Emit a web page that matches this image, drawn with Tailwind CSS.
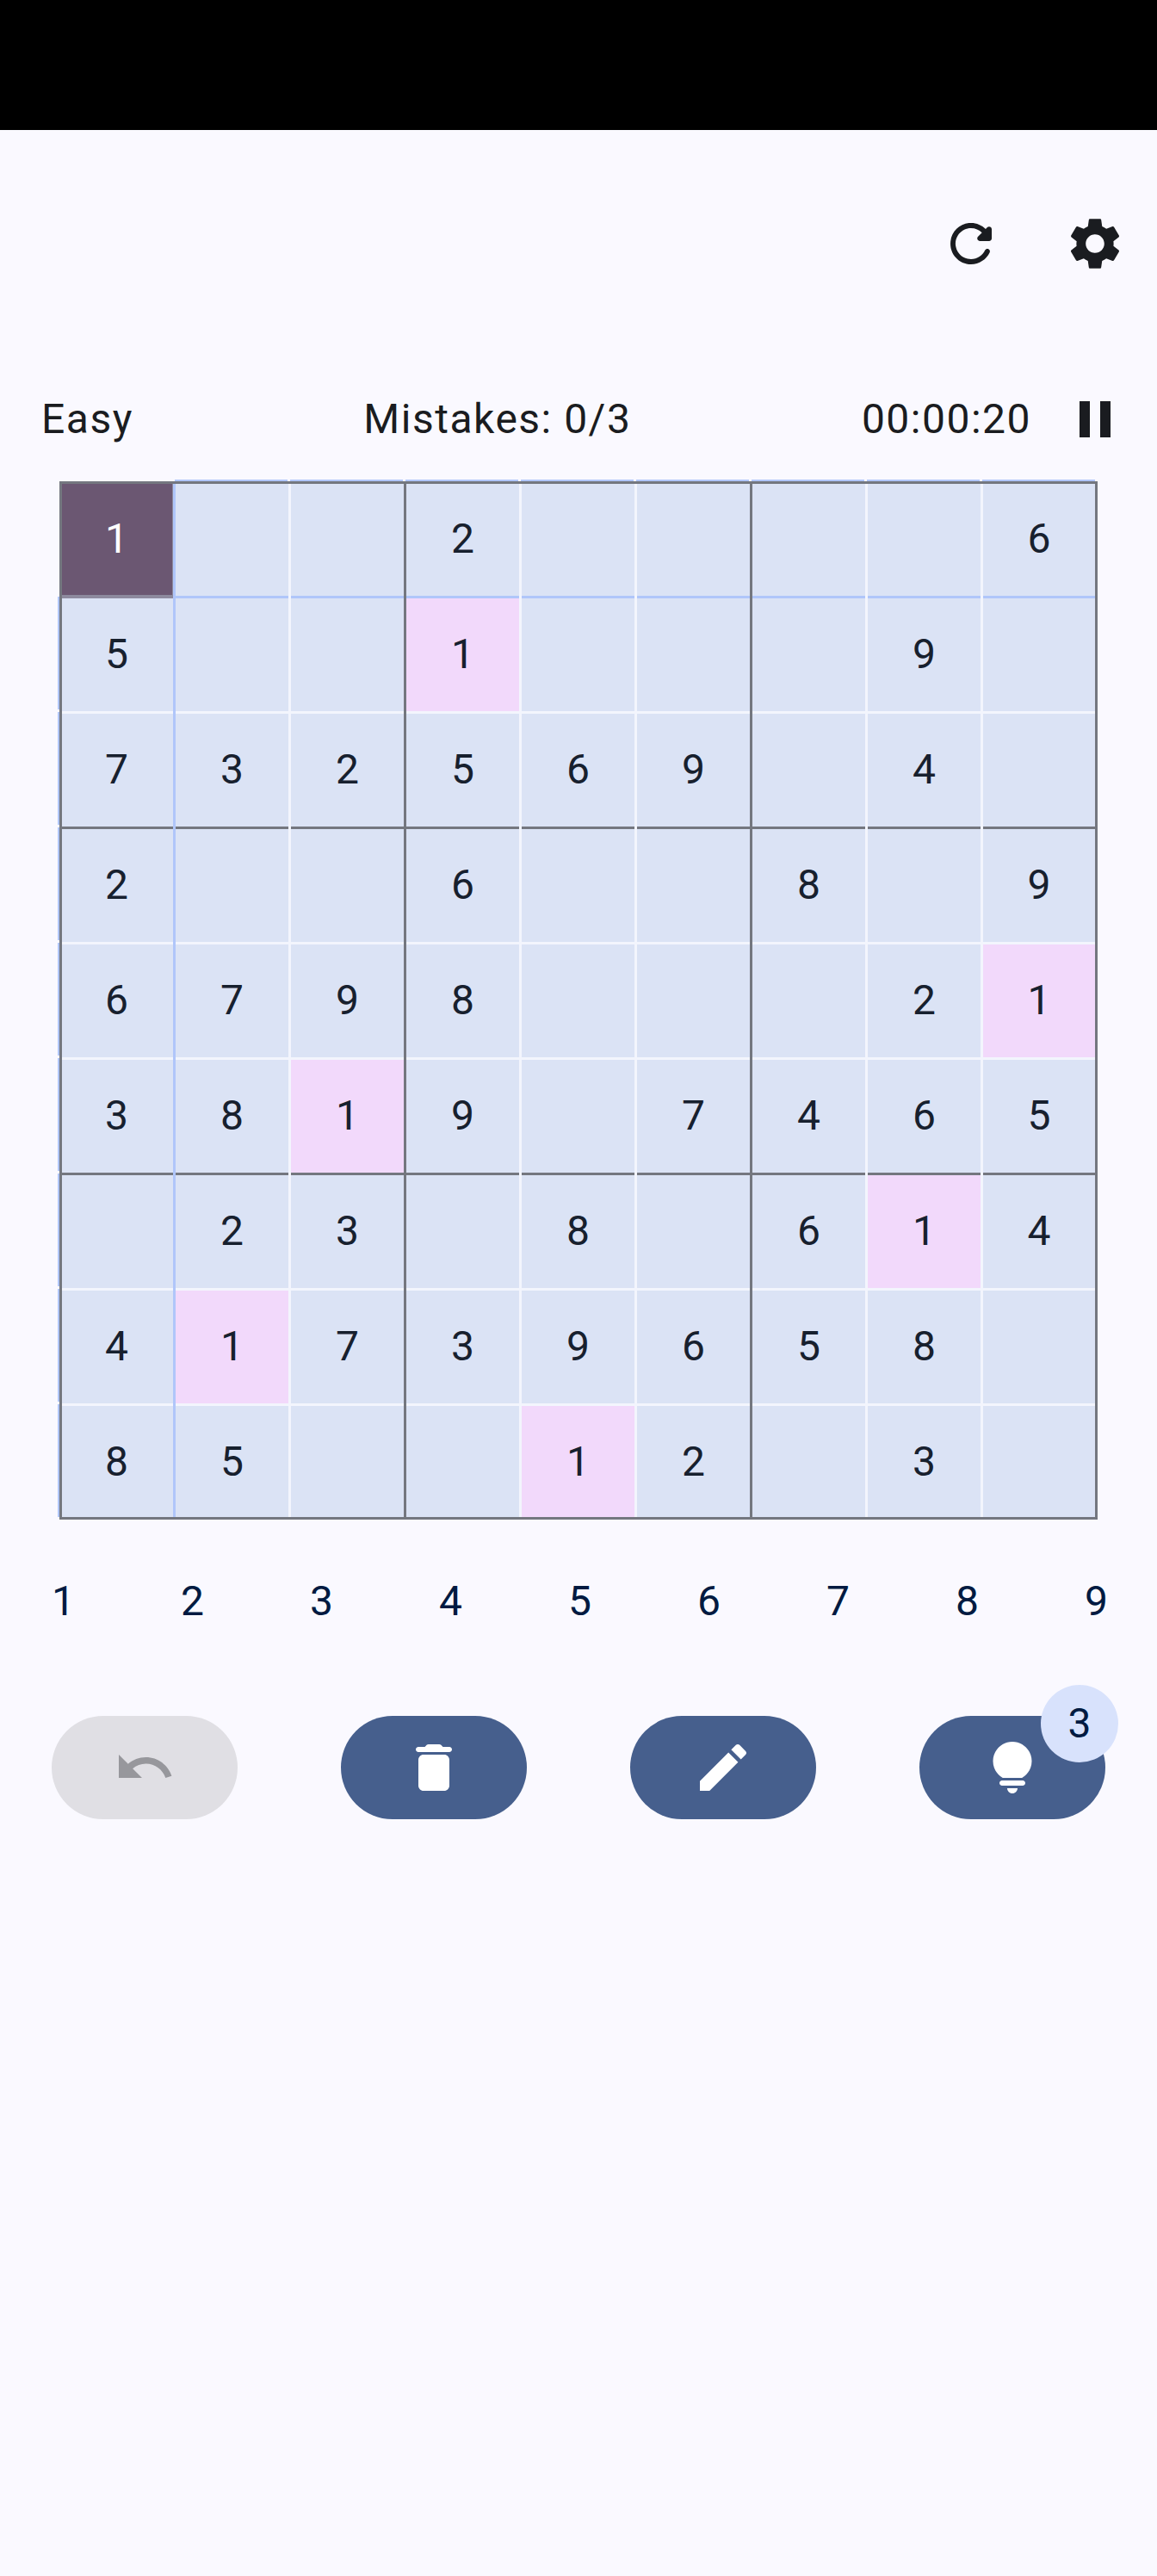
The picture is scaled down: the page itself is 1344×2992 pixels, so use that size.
<!doctype html>
<html>
<head>
<meta charset="utf-8">
<script src="https://cdn.jsdelivr.net/npm/@tailwindcss/browser@4"></script>
</head>
<body class="bg-[#faf9ff]">
<div class="min-h-[2992px] bg-[#faf9ff] text-[#1a1c20] [font-family:Roboto,sans-serif]">
  <div class="h-[151px] bg-black"></div>

  <div class="mt-[96px] flex h-[72px] justify-end gap-[72px] pr-[36px]">
    <svg class="h-[72px] w-[72px]" viewBox="0 0 24 24" fill="#1a1c20"><path d="M17.65 6.35c-1.63-1.63-3.94-2.57-6.48-2.31-3.67.37-6.69 3.35-7.1 7.02C3.52 15.91 7.27 20 12 20c3.19 0 5.93-1.87 7.21-4.56.32-.67-.16-1.44-.9-1.44-.37 0-.72.2-.88.53-1.13 2.43-3.84 3.97-6.8 3.31-2.22-.49-4.01-2.3-4.48-4.52C5.31 9.44 8.26 6 12 6c1.66 0 3.14.69 4.22 1.78l-1.51 1.51c-.63.63-.19 1.71.7 1.71H19c.55 0 1-.45 1-1V6.41c0-.89-1.08-1.34-1.71-.71l-.64.65z"/></svg>
    <svg class="h-[72px] w-[72px]" viewBox="0 0 24 24" fill="#1a1c20"><path d="M19.14 12.94c.04-.3.06-.61.06-.94 0-.32-.02-.64-.07-.94l2.03-1.58c.18-.14.23-.41.12-.61l-1.92-3.32c-.12-.22-.37-.29-.59-.22l-2.39.96c-.5-.38-1.03-.7-1.62-.94l-.36-2.54c-.04-.24-.24-.41-.48-.41h-3.84c-.24 0-.43.17-.47.41l-.36 2.54c-.59.24-1.13.57-1.62.94l-2.39-.96c-.22-.08-.47 0-.59.22L2.74 8.87c-.12.21-.08.47.12.61l2.03 1.58c-.05.3-.09.63-.09.94s.02.64.07.94l-2.03 1.58c-.18.14-.23.41-.12.61l1.92 3.32c.12.22.37.29.59.22l2.39-.96c.5.38 1.03.7 1.62.94l.36 2.54c.05.24.24.41.48.41h3.84c.24 0 .44-.17.47-.41l.36-2.54c.59-.24 1.13-.56 1.62-.94l2.39.96c.22.08.47 0 .59-.22l1.92-3.32c.12-.22.07-.47-.12-.61l-2.01-1.58zM12 15.6c-1.98 0-3.6-1.62-3.6-3.6s1.62-3.6 3.6-3.6 3.6 1.62 3.6 3.6-1.62 3.6-3.6 3.6z"/></svg>
  </div>

  <div class="mt-[132px] flex h-[72px] items-center justify-between pl-[48px] pr-[36px] text-[48px] tracking-[1.5px]">
    <span>Easy</span>
    <span>Mistakes: 0/3</span>
    <div class="flex items-center gap-[38px]">
      <span>00:00:20</span>
      <svg class="h-[72px] w-[72px]" viewBox="0 0 24 24" fill="#1a1c20"><path d="M6 19h4V5H6v14zm8-14v14h4V5h-4z"/></svg>
    </div>
  </div>

  <div class="relative ml-[69px] mt-[36px] h-[1206px] w-[1206px] pl-[1px] pt-[2px] text-[48px] text-[#17202e]">
    <div class="flex h-[134px] bg-[#dbe3f5] [&>div]:pb-[5px] [&>div]:shadow-[inset_0_-3px_0_#b0c6fa]">
      <div class="flex w-[134px] items-center justify-center border-r-[3px] border-[#b0c6fa] bg-[#6b5772] text-white shadow-[inset_-1px_-4px_0_#8d8a9e,inset_0_-3px_0_#b0c6fa]!">1</div>
      <div class="flex w-[134px] items-center justify-center border-r-[3px] border-[#f3f5fd]"></div>
      <div class="flex w-[134px] items-center justify-center border-r-[3px] border-[#74777f]"></div>
      <div class="flex w-[134px] items-center justify-center border-r-[3px] border-[#f3f5fd]">2</div>
      <div class="flex w-[134px] items-center justify-center border-r-[3px] border-[#f3f5fd]"></div>
      <div class="flex w-[134px] items-center justify-center border-r-[3px] border-[#74777f]"></div>
      <div class="flex w-[134px] items-center justify-center border-r-[3px] border-[#f3f5fd]"></div>
      <div class="flex w-[134px] items-center justify-center border-r-[3px] border-[#f3f5fd]"></div>
      <div class="flex w-[133px] items-center justify-center border-r-[3px] border-transparent">6</div>
    </div>
    <div class="flex h-[134px] bg-[#dbe3f5] [&>div]:pb-[5px] [&>div]:shadow-[inset_0_-3px_0_#f3f5fd]">
      <div class="flex w-[134px] items-center justify-center border-r-[3px] border-[#b0c6fa]">5</div>
      <div class="flex w-[134px] items-center justify-center border-r-[3px] border-[#f3f5fd]"></div>
      <div class="flex w-[134px] items-center justify-center border-r-[3px] border-[#74777f]"></div>
      <div class="flex w-[134px] items-center justify-center border-r-[3px] border-[#f3f5fd] bg-[#f2d9fb]">1</div>
      <div class="flex w-[134px] items-center justify-center border-r-[3px] border-[#f3f5fd]"></div>
      <div class="flex w-[134px] items-center justify-center border-r-[3px] border-[#74777f]"></div>
      <div class="flex w-[134px] items-center justify-center border-r-[3px] border-[#f3f5fd]"></div>
      <div class="flex w-[134px] items-center justify-center border-r-[3px] border-[#f3f5fd]">9</div>
      <div class="flex w-[133px] items-center justify-center border-r-[3px] border-transparent"></div>
    </div>
    <div class="flex h-[134px] bg-[#dbe3f5] [&>div]:pb-[5px] [&>div]:shadow-[inset_0_-3px_0_#74777f]">
      <div class="flex w-[134px] items-center justify-center border-r-[3px] border-[#b0c6fa]">7</div>
      <div class="flex w-[134px] items-center justify-center border-r-[3px] border-[#f3f5fd]">3</div>
      <div class="flex w-[134px] items-center justify-center border-r-[3px] border-[#74777f]">2</div>
      <div class="flex w-[134px] items-center justify-center border-r-[3px] border-[#f3f5fd]">5</div>
      <div class="flex w-[134px] items-center justify-center border-r-[3px] border-[#f3f5fd]">6</div>
      <div class="flex w-[134px] items-center justify-center border-r-[3px] border-[#74777f]">9</div>
      <div class="flex w-[134px] items-center justify-center border-r-[3px] border-[#f3f5fd]"></div>
      <div class="flex w-[134px] items-center justify-center border-r-[3px] border-[#f3f5fd]">4</div>
      <div class="flex w-[133px] items-center justify-center border-r-[3px] border-transparent"></div>
    </div>
    <div class="flex h-[134px] bg-[#dbe3f5] [&>div]:pb-[5px] [&>div]:shadow-[inset_0_-3px_0_#f3f5fd]">
      <div class="flex w-[134px] items-center justify-center border-r-[3px] border-[#b0c6fa]">2</div>
      <div class="flex w-[134px] items-center justify-center border-r-[3px] border-[#f3f5fd]"></div>
      <div class="flex w-[134px] items-center justify-center border-r-[3px] border-[#74777f]"></div>
      <div class="flex w-[134px] items-center justify-center border-r-[3px] border-[#f3f5fd]">6</div>
      <div class="flex w-[134px] items-center justify-center border-r-[3px] border-[#f3f5fd]"></div>
      <div class="flex w-[134px] items-center justify-center border-r-[3px] border-[#74777f]"></div>
      <div class="flex w-[134px] items-center justify-center border-r-[3px] border-[#f3f5fd]">8</div>
      <div class="flex w-[134px] items-center justify-center border-r-[3px] border-[#f3f5fd]"></div>
      <div class="flex w-[133px] items-center justify-center border-r-[3px] border-transparent">9</div>
    </div>
    <div class="flex h-[134px] bg-[#dbe3f5] [&>div]:pb-[5px] [&>div]:shadow-[inset_0_-3px_0_#f3f5fd]">
      <div class="flex w-[134px] items-center justify-center border-r-[3px] border-[#b0c6fa]">6</div>
      <div class="flex w-[134px] items-center justify-center border-r-[3px] border-[#f3f5fd]">7</div>
      <div class="flex w-[134px] items-center justify-center border-r-[3px] border-[#74777f]">9</div>
      <div class="flex w-[134px] items-center justify-center border-r-[3px] border-[#f3f5fd]">8</div>
      <div class="flex w-[134px] items-center justify-center border-r-[3px] border-[#f3f5fd]"></div>
      <div class="flex w-[134px] items-center justify-center border-r-[3px] border-[#74777f]"></div>
      <div class="flex w-[134px] items-center justify-center border-r-[3px] border-[#f3f5fd]"></div>
      <div class="flex w-[134px] items-center justify-center border-r-[3px] border-[#f3f5fd]">2</div>
      <div class="flex w-[133px] items-center justify-center border-r-[3px] border-transparent bg-[#f2d9fb] bg-clip-padding">1</div>
    </div>
    <div class="flex h-[134px] bg-[#dbe3f5] [&>div]:pb-[5px] [&>div]:shadow-[inset_0_-3px_0_#74777f]">
      <div class="flex w-[134px] items-center justify-center border-r-[3px] border-[#b0c6fa]">3</div>
      <div class="flex w-[134px] items-center justify-center border-r-[3px] border-[#f3f5fd]">8</div>
      <div class="flex w-[134px] items-center justify-center border-r-[3px] border-[#74777f] bg-[#f2d9fb]">1</div>
      <div class="flex w-[134px] items-center justify-center border-r-[3px] border-[#f3f5fd]">9</div>
      <div class="flex w-[134px] items-center justify-center border-r-[3px] border-[#f3f5fd]"></div>
      <div class="flex w-[134px] items-center justify-center border-r-[3px] border-[#74777f]">7</div>
      <div class="flex w-[134px] items-center justify-center border-r-[3px] border-[#f3f5fd]">4</div>
      <div class="flex w-[134px] items-center justify-center border-r-[3px] border-[#f3f5fd]">6</div>
      <div class="flex w-[133px] items-center justify-center border-r-[3px] border-transparent">5</div>
    </div>
    <div class="flex h-[134px] bg-[#dbe3f5] [&>div]:pb-[5px] [&>div]:shadow-[inset_0_-3px_0_#f3f5fd]">
      <div class="flex w-[134px] items-center justify-center border-r-[3px] border-[#b0c6fa]"></div>
      <div class="flex w-[134px] items-center justify-center border-r-[3px] border-[#f3f5fd]">2</div>
      <div class="flex w-[134px] items-center justify-center border-r-[3px] border-[#74777f]">3</div>
      <div class="flex w-[134px] items-center justify-center border-r-[3px] border-[#f3f5fd]"></div>
      <div class="flex w-[134px] items-center justify-center border-r-[3px] border-[#f3f5fd]">8</div>
      <div class="flex w-[134px] items-center justify-center border-r-[3px] border-[#74777f]"></div>
      <div class="flex w-[134px] items-center justify-center border-r-[3px] border-[#f3f5fd]">6</div>
      <div class="flex w-[134px] items-center justify-center border-r-[3px] border-[#f3f5fd] bg-[#f2d9fb]">1</div>
      <div class="flex w-[133px] items-center justify-center border-r-[3px] border-transparent">4</div>
    </div>
    <div class="flex h-[134px] bg-[#dbe3f5] [&>div]:pb-[5px] [&>div]:shadow-[inset_0_-3px_0_#f3f5fd]">
      <div class="flex w-[134px] items-center justify-center border-r-[3px] border-[#b0c6fa]">4</div>
      <div class="flex w-[134px] items-center justify-center border-r-[3px] border-[#f3f5fd] bg-[#f2d9fb]">1</div>
      <div class="flex w-[134px] items-center justify-center border-r-[3px] border-[#74777f]">7</div>
      <div class="flex w-[134px] items-center justify-center border-r-[3px] border-[#f3f5fd]">3</div>
      <div class="flex w-[134px] items-center justify-center border-r-[3px] border-[#f3f5fd]">9</div>
      <div class="flex w-[134px] items-center justify-center border-r-[3px] border-[#74777f]">6</div>
      <div class="flex w-[134px] items-center justify-center border-r-[3px] border-[#f3f5fd]">5</div>
      <div class="flex w-[134px] items-center justify-center border-r-[3px] border-[#f3f5fd]">8</div>
      <div class="flex w-[133px] items-center justify-center border-r-[3px] border-transparent"></div>
    </div>
    <div class="flex h-[132px] bg-[#dbe3f5] [&>div]:pb-[3px]">
      <div class="flex w-[134px] items-center justify-center border-r-[3px] border-[#b0c6fa]">8</div>
      <div class="flex w-[134px] items-center justify-center border-r-[3px] border-[#f3f5fd]">5</div>
      <div class="flex w-[134px] items-center justify-center border-r-[3px] border-[#74777f]"></div>
      <div class="flex w-[134px] items-center justify-center border-r-[3px] border-[#f3f5fd]"></div>
      <div class="flex w-[134px] items-center justify-center border-r-[3px] border-[#f3f5fd] bg-[#f2d9fb]">1</div>
      <div class="flex w-[134px] items-center justify-center border-r-[3px] border-[#74777f]">2</div>
      <div class="flex w-[134px] items-center justify-center border-r-[3px] border-[#f3f5fd]"></div>
      <div class="flex w-[134px] items-center justify-center border-r-[3px] border-[#f3f5fd]">3</div>
      <div class="flex w-[133px] items-center justify-center border-r-[3px] border-transparent"></div>
    </div>

    <div class="pointer-events-none absolute inset-0 border-[3px] border-[#74777f]"></div>
    <div class="absolute left-[134px] top-[-2px] flex gap-[3px]">
      <div class="h-[2px] w-[131px] bg-[#b0c6fa]"></div>
      <div class="h-[2px] w-[131px] bg-[#b0c6fa]"></div>
      <div class="h-[2px] w-[131px] bg-[#b0c6fa]"></div>
      <div class="h-[2px] w-[131px] bg-[#b0c6fa]"></div>
      <div class="h-[2px] w-[131px] bg-[#b0c6fa]"></div>
      <div class="h-[2px] w-[131px] bg-[#b0c6fa]"></div>
      <div class="h-[2px] w-[131px] bg-[#b0c6fa]"></div>
      <div class="h-[2px] w-[131px] bg-[#b0c6fa]"></div>
    </div>
    <div class="absolute left-[-2px] top-[134px] flex flex-col gap-[3px]">
      <div class="h-[131px] w-[2px] bg-[#b0c6fa]"></div>
      <div class="h-[131px] w-[2px] bg-[#b0c6fa]"></div>
      <div class="h-[131px] w-[2px] bg-[#b0c6fa]"></div>
      <div class="h-[131px] w-[2px] bg-[#b0c6fa]"></div>
      <div class="h-[131px] w-[2px] bg-[#b0c6fa]"></div>
      <div class="h-[131px] w-[2px] bg-[#b0c6fa]"></div>
      <div class="h-[131px] w-[2px] bg-[#b0c6fa]"></div>
      <div class="h-[131px] w-[2px] bg-[#b0c6fa]"></div>
    </div>
  </div>

  <div class="mt-[59px] flex h-[72px] items-center justify-between pl-[60px] pr-[57px] text-[48px] text-[#001a41]">
    <span>1</span><span>2</span><span>3</span><span>4</span><span>5</span><span>6</span><span>7</span><span>8</span><span>9</span>
  </div>

  <div class="mt-[97px] flex justify-between px-[60px]">
    <div class="flex h-[120px] w-[216px] items-center justify-center rounded-full bg-[#e0dfe4]">
      <svg class="h-[72px] w-[72px]" viewBox="0 0 24 24" fill="#97979c"><path d="M12.5 8c-2.65 0-5.05.99-6.9 2.6L2 7v9h9l-3.62-3.62c1.39-1.16 3.16-1.88 5.12-1.88 3.54 0 6.55 2.31 7.6 5.5l2.37-.78C21.08 11.03 17.15 8 12.5 8z"/></svg>
    </div>
    <div class="flex h-[120px] w-[216px] items-center justify-center rounded-full bg-[#465f8d]">
      <svg class="h-[72px] w-[72px]" viewBox="0 0 24 24" fill="#ffffff"><path d="M6 19c0 1.1.9 2 2 2h8c1.1 0 2-.9 2-2V9c0-1.1-.9-2-2-2H8c-1.1 0-2 .9-2 2v10zM18 4h-2.5l-.71-.71c-.18-.18-.44-.29-.7-.29H9.91c-.26 0-.52.11-.7.29L8.5 4H6c-.55 0-1 .45-1 1s.45 1 1 1h12c.55 0 1-.45 1-1s-.45-1-1-1z"/></svg>
    </div>
    <div class="flex h-[120px] w-[216px] items-center justify-center rounded-full bg-[#465f8d]">
      <svg class="h-[72px] w-[72px]" viewBox="0 0 24 24" fill="#ffffff"><path d="M3 17.25V21h3.75L17.81 9.94l-3.75-3.75L3 17.25zM20.71 7.04c.39-.39.39-1.02 0-1.41l-2.34-2.34c-.39-.39-1.02-.39-1.41 0l-1.83 1.83 3.75 3.75 1.83-1.83z"/></svg>
    </div>
    <div class="relative flex h-[120px] w-[216px] items-center justify-center rounded-full bg-[#465f8d]">
      <svg class="h-[72px] w-[72px]" viewBox="0 0 24 24" fill="#ffffff"><path d="M12 22c1.1 0 2-.9 2-2h-4c0 1.1.9 2 2 2zm-4-3h8c.55 0 1-.45 1-1s-.45-1-1-1H8c-.55 0-1 .45-1 1s.45 1 1 1zm4-17C7.86 2 4.5 5.36 4.5 9.5c0 3.82 2.66 5.86 3.77 6.5h7.46c1.11-.64 3.77-2.68 3.77-6.5C19.5 5.36 16.14 2 12 2z"/></svg>
      <div class="absolute left-[141px] top-[-36px] flex h-[90px] w-[90px] items-center justify-center rounded-full bg-[#d8e2fc] text-[48px] text-[#001a41]">3</div>
    </div>
  </div>
</div>
</body>
</html>
